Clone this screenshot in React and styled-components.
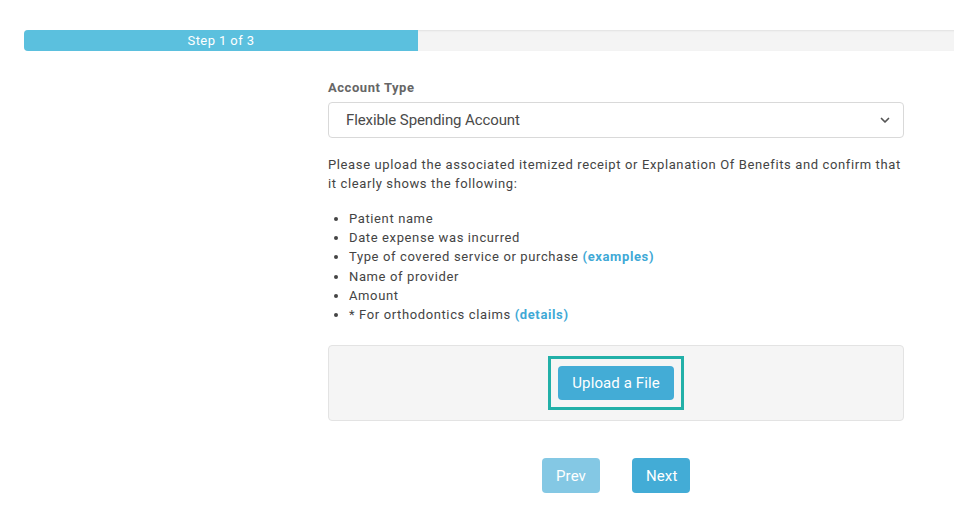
import React from 'react';
import styled, { createGlobalStyle } from 'styled-components';

const GlobalStyle = createGlobalStyle`
  html, body {
    margin: 0;
    padding: 0;
    background: #fff;
  }
  body {
    font-family: Roboto, "Liberation Sans", Arial, sans-serif;
    color: #333;
    overflow: hidden;
  }
`;

const Page = styled.div`
  width: 954px;
  height: 520px;
  padding-top: 30px;
  box-sizing: border-box;
`;

const Progress = styled.div`
  margin-left: 24px;
  width: 960px;
  height: 21px;
  background: #f4f4f4;
  border-radius: 4px;
  box-shadow: inset 0 1px 2px rgba(0, 0, 0, 0.08);
  overflow: hidden;
  display: flex;
`;

const ProgressFill = styled.div`
  width: ${({ width }) => width};
  background: #5bc0de;
  color: #fff;
  font-size: 13px;
  line-height: 21px;
  text-align: center;
  letter-spacing: 0.4px;
`;

const Form = styled.div`
  width: 576px;
  margin: 29px 0 0 328px;
  display: flex;
  flex-direction: column;
`;

const Label = styled.label`
  font-size: 13px;
  font-weight: 700;
  color: #666;
  letter-spacing: 0.55px;
  line-height: 16px;
  margin-bottom: 6px;
`;

const SelectBox = styled.div`
  height: 36px;
  border: 1px solid #d9d9d9;
  border-radius: 4px;
  box-sizing: border-box;
  display: flex;
  align-items: center;
  justify-content: space-between;
  padding: 0 12px 0 17px;
  font-size: 15px;
  color: #4a4a4a;
  letter-spacing: -0.1px;
`;

const Intro = styled.p`
  margin: 17px 0 0;
  font-size: 13px;
  line-height: 19px;
  letter-spacing: 0.62px;
  color: #444;
`;

const List = styled.ul`
  margin: 16px 0 0;
  padding-left: 21px;
  font-size: 13px;
  line-height: 19.2px;
  letter-spacing: 0.62px;
  color: #444;
`;

const Link = styled.a`
  color: #3fa9d6;
  font-weight: 700;
  text-decoration: none;
`;

const Well = styled.div`
  margin-top: 21px;
  height: 76px;
  box-sizing: border-box;
  background: #f5f5f5;
  border: 1px solid #e3e3e3;
  border-radius: 4px;
  display: flex;
  align-items: center;
  justify-content: center;
`;

const Focus = styled.div`
  padding: 7px;
  border: 3px solid #22b0a8;
  display: flex;
`;

const Button = styled.button`
  border: none;
  border-radius: 4px;
  background: #43acd6;
  opacity: ${({ disabled }) => (disabled ? 0.65 : 1)};
  color: #fff;
  font-family: Roboto, "Liberation Sans", Arial, sans-serif;
  font-size: 15px;
  height: ${({ tall }) => tall || '34px'};
  width: ${({ wide }) => wide || 'auto'};
  padding: 0 14px;
  letter-spacing: 0.1px;
  cursor: pointer;
`;

const Actions = styled.div`
  margin-top: 37px;
  display: flex;
  justify-content: center;
  gap: 32px;
`;

const Chevron = () => (
  <svg width="12" height="12" viewBox="0 0 12 12" fill="none">
    <path d="M2.5 4.5 L6 8 L9.5 4.5" stroke="#555" strokeWidth="1.7" strokeLinecap="round" strokeLinejoin="round" />
  </svg>
);

export default function App() {
  return (
    <Page>
      <GlobalStyle />
      <Progress>
        <ProgressFill width="394px">Step 1 of 3</ProgressFill>
      </Progress>
      <Form>
        <Label>Account Type</Label>
        <SelectBox>
          <span>Flexible Spending Account</span>
          <Chevron />
        </SelectBox>
        <Intro>
          Please upload the associated itemized receipt or Explanation Of Benefits and confirm that
          it clearly shows the following:
        </Intro>
        <List>
          <li>Patient name</li>
          <li>Date expense was incurred</li>
          <li>
            Type of covered service or purchase <Link href="#">(examples)</Link>
          </li>
          <li>Name of provider</li>
          <li>Amount</li>
          <li>
            * For orthodontics claims <Link href="#">(details)</Link>
          </li>
        </List>
        <Well>
          <Focus>
            <Button>Upload a File</Button>
          </Focus>
        </Well>
        <Actions>
          <Button disabled tall="35px" wide="58px">Prev</Button>
          <Button tall="35px" wide="58px">Next</Button>
        </Actions>
      </Form>
    </Page>
  );
}
